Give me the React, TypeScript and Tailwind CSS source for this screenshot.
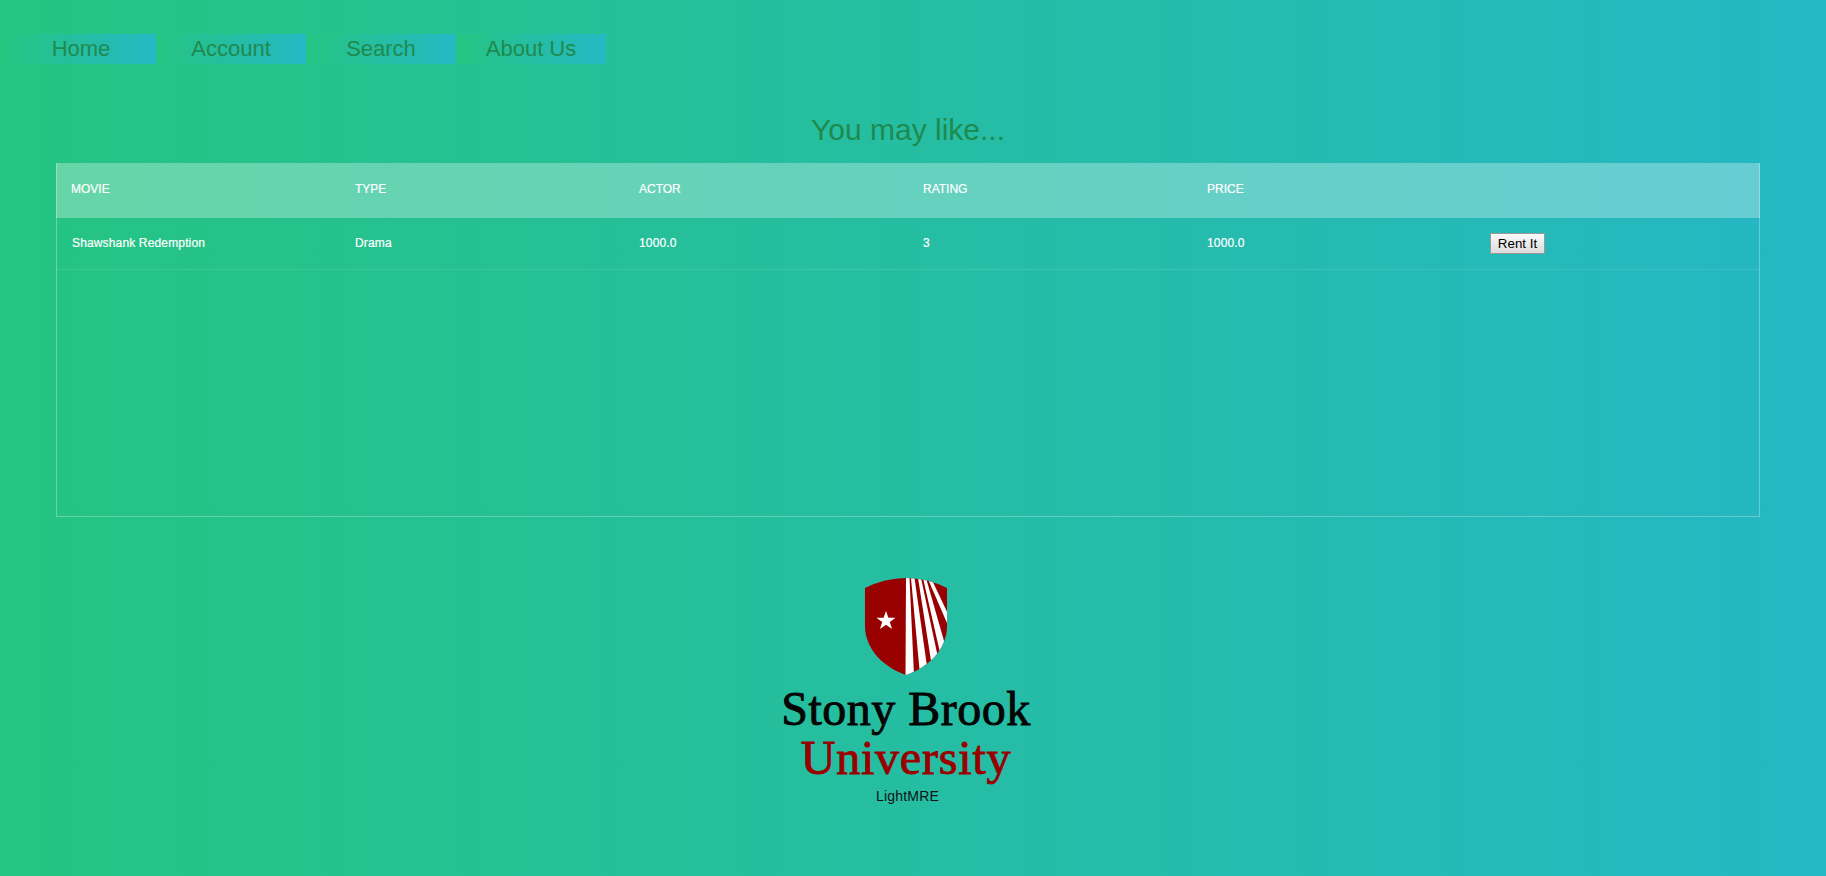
const nav = ["Home", "Account", "Search", "About Us"];
const heads = ["Movie", "Type", "Actor", "Rating", "Price", ""];
const cells = ["Shawshank Redemption", "Drama", "1000.0", "3", "1000.0"];

function Shield() {
  return (
    <svg width="82" height="97" viewBox="0 0 82 97" className="block">
      <defs>
        <clipPath id="sh">
          <path d="M0 10 Q20 0 41 0 Q62 0 82 10 L82 48 C82 72 62 90 41 97 C20 90 0 72 0 48 Z" />
        </clipPath>
      </defs>
      <path d="M0 10 Q20 0 41 0 Q62 0 82 10 L82 48 C82 72 62 90 41 97 C20 90 0 72 0 48 Z" fill="#990000" />
      <g clipPath="url(#sh)" fill="#fff">
        <path d="M41 0 L44.5 0 L49 97 L40.5 97 Z" />
        <path d="M46 0 L49.5 0 L62.5 92 L55 97 Z" />
        <path d="M53 0 L56 0 L73.5 82 L67 89 Z" />
        <path d="M58 0 L61 0 L81 70 L76 79 Z" />
        <path d="M62.5 0 L66 0 L85 40 L85 52 Z" />
      </g>
      <path d="M21 33 L23.4 39.8 L30.5 39.8 L24.8 44 L27 51 L21 46.8 L15 51 L17.2 44 L11.5 39.8 L18.6 39.8 Z" fill="#fff" />
    </svg>
  );
}

export default function App() {
  return (
    <div className="min-h-[876px] w-full bg-linear-to-r/srgb from-[#25c481] to-[#25b7c4] font-['Liberation_Sans',Arial,sans-serif] overflow-hidden">
      <nav className="flex pl-[6px] pt-[34px]">
        {nav.map((n) => (
          <a
            key={n}
            className="w-[150px] h-[30px] pb-[2px] flex items-center justify-center text-[22px] text-[#1f8a4e] bg-linear-to-r/srgb from-[#25c481] to-[#25b7c4]"
          >
            {n}
          </a>
        ))}
      </nav>
      <div className="ml-[56px] w-[1704px]">
        <h1 className="mt-[48px] h-[36px] leading-[36px] text-center text-[30px] text-[#1f8a4e]">You may like...</h1>
        <div className="mt-[15px] h-[354px] border border-white/30 border-t-0">
          <div className="grid grid-cols-6 h-[55px] pb-[3px] -mx-px items-center bg-white/30 text-[12px] uppercase text-white [-webkit-text-stroke:0.2px_white]">
            {heads.map((h, i) => (
              <div key={i} className="pl-[15px]">{h}</div>
            ))}
          </div>
          <div className="grid grid-cols-6 h-[52px] -mx-px items-center border-b border-white/10 text-[12px] tracking-[0.15px] text-white">
            {cells.map((c, i) => (
              <div key={i} className={i === 0 ? "pl-[16px] pb-[2px] [-webkit-text-stroke:0.2px_white]" : "pl-[15px] pb-[2px] [-webkit-text-stroke:0.2px_white]"}>{c}</div>
            ))}
            <div className="pl-[14px]">
              <button className="w-[55px] h-[21px] text-[13.33px] leading-none tracking-normal text-black border border-[#999] bg-linear-to-b from-[#fafafa] to-[#dcdcdc]">
                Rent It
              </button>
            </div>
          </div>
        </div>
      </div>
      <div className="mt-[61px] flex flex-col items-center ml-[-14px]">
        <Shield />
        <div className="mt-[9px] h-[49px] pt-[1px] leading-[48px] text-[48px] tracking-[0.5px] text-[#050505] font-['Liberation_Serif',serif] whitespace-nowrap [-webkit-text-stroke:0.9px_#050505]">
          Stony Brook
        </div>
        <div className="h-[48px] pt-[2px] leading-[46px] text-[48px] tracking-[0.8px] text-[#990000] font-['Liberation_Serif',serif] whitespace-nowrap [-webkit-text-stroke:0.9px_#990000]">
          University
        </div>
        <div className="mt-[7px] ml-[3px] text-[14px] tracking-[0.2px] leading-[16px] text-[#111]">LightMRE</div>
      </div>
    </div>
  );
}
